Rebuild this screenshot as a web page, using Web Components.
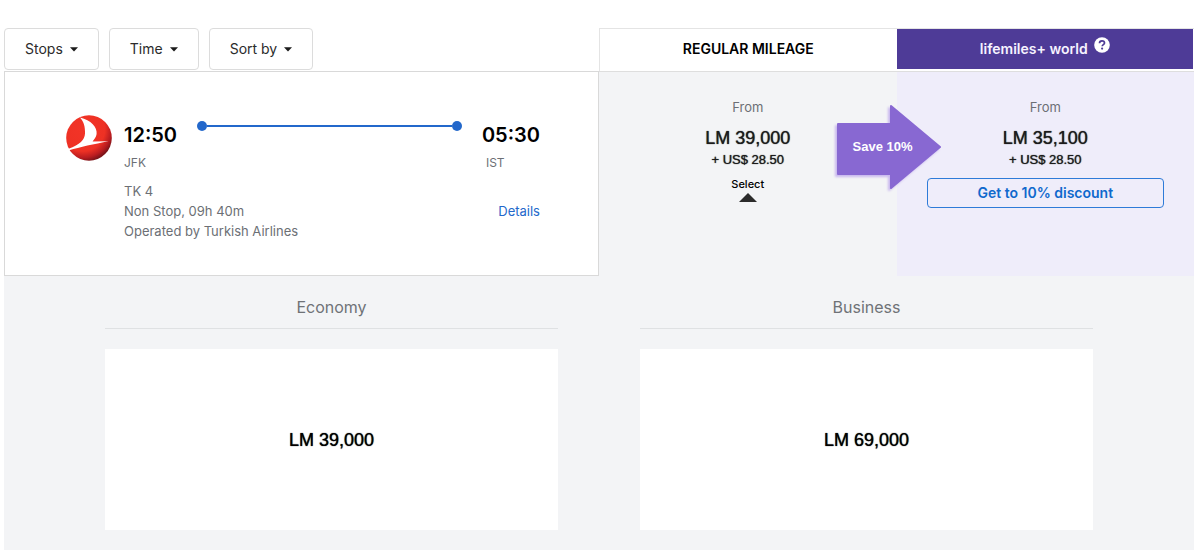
<!DOCTYPE html>
<html lang="en">
<head>
<meta charset="utf-8">
<title>Flight results</title>
<style>
  body { margin: 0; background: #fff; color: #1b1b1b; font-family: Inter, "Liberation Sans", sans-serif; font-size: 14px; line-height: 20px; }
</style>
</head>
<body>
<flight-results></flight-results>

<template id="flight-results">
  <style>
    :host { display: block; padding: 28px 6px 8px 4px; }
    .grid { display: grid; grid-template-columns: 2fr 1fr 1fr; }
    .filters { display: flex; gap: 10px; align-items: flex-start; }
    .cabins { display: grid; grid-template-columns: 1fr 1fr; padding: 19px 60px 20px; background: #f3f4f6; }
  </style>
  <div class="grid">
    <div class="filters">
      <filter-button>Stops</filter-button>
      <filter-button>Time</filter-button>
      <filter-button>Sort by</filter-button>
    </div>
    <fare-heading>REGULAR MILEAGE</fare-heading>
    <fare-heading plus>lifemiles+ world</fare-heading>
    <flight-card></flight-card>
    <fare-offer>
      <span slot="miles">LM 39,000</span>
      <span slot="tax">+ US$ 28.50</span>
      <select-toggle slot="action"></select-toggle>
    </fare-offer>
    <fare-offer plus>
      <save-arrow slot="badge">Save 10%</save-arrow>
      <span slot="miles">LM 35,100</span>
      <span slot="tax">+ US$ 28.50</span>
      <discount-button slot="action">Get to 10% discount</discount-button>
    </fare-offer>
  </div>
  <div class="cabins">
    <cabin-fare><span slot="name">Economy</span>LM 39,000</cabin-fare>
    <cabin-fare><span slot="name">Business</span>LM 69,000</cabin-fare>
  </div>
</template>

<template id="filter-button">
  <style>
    :host { display: block; }
    button { display: flex; align-items: center; gap: 7px; height: 42px; padding: 0 20px; border: 1px solid #dcdcdc; border-radius: 4px; background: #fff; color: #2b2b2b; font: inherit; cursor: pointer; }
    svg { display: block; }
  </style>
  <button type="button" aria-haspopup="true"><slot></slot>
    <svg width="8" height="5" viewBox="0 0 8 5" aria-hidden="true"><path d="M0 .3h8L4 4.6z" fill="#1b1b1b"/></svg>
  </button>
</template>

<template id="fare-heading">
  <style>
    :host { display: block; height: 43px; box-sizing: border-box; border: 1px solid #e4e4e4; border-width: 1px 0 0 1px; }
    .cell { display: flex; justify-content: center; height: 40px; align-items: center; color: #000; font-weight: 600; }
    button { display: none; }
    :host([plus]) { border-left: 0; padding-right: 1px; }
    :host([plus]) .cell { background: #4e3b97; color: #f6f3ff; gap: 6px; }
    :host([plus]) button { display: block; align-self: flex-start; margin: 8px 0 0; padding: 0; border: 0; background: none; cursor: pointer; }
    svg { display: block; }
  </style>
  <div class="cell"><slot></slot>
    <button type="button" aria-label="About lifemiles+ world">
      <svg width="16" height="16" viewBox="0 0 16 16" aria-hidden="true"><circle cx="8" cy="8" r="7.8" fill="#fff"/><path d="M5.5 6.2c0-1.5 1-2.4 2.5-2.4s2.5.9 2.5 2.1c0 1.700-2.300 1.800-2.300 3.400" fill="none" stroke="#4e3b97" stroke-width="1.700"/><circle cx="8.100" cy="11.600" r="1.100" fill="#4e3b97"/></svg>
    </button>
  </div>
</template>

<template id="flight-card">
  <style>
    :host { display: flex; gap: 12px; box-sizing: border-box; height: 205px; padding: 43px 58px 0 61px; border: 1px solid #d9d9d9; background: #fff; color: #6c6f75; }
    .logo { flex: none; display: block; }
    .trip { flex: 1; padding-top: 6px; }
    .leg { display: flex; }
    .time { color: #000; font-size: 20px; line-height: 28px; font-weight: 600; }
    .code { font-size: 12px; margin-top: 4px; }
    .arrive .code { padding-left: 4px; }
    .track { flex: 1; display: flex; align-items: center; height: 10px; margin: 0 20px; }
    .track::before, .track::after { content: ""; width: 10px; height: 10px; border-radius: 50%; background: #2368cb; }
    .track i { flex: 1; height: 2px; background: #2368cb; }
    .info { display: flex; justify-content: space-between; align-items: center; margin-top: 8px; font-size: 13px; }
    a { color: #2368cb; text-decoration: none; }
  </style>
  <svg class="logo" width="46" height="46" viewBox="0 0 46 46" role="img" aria-label="Turkish Airlines">
    <defs><radialGradient id="ball" cx=".36" cy=".3" r=".72"><stop offset="0" stop-color="#f23427"/><stop offset=".68" stop-color="#ee3124"/><stop offset=".88" stop-color="#b91c20"/><stop offset="1" stop-color="#7c1419"/></radialGradient></defs>
    <circle cx="23" cy="23" r="22.800" fill="url(#ball)"/>
    <path d="M14 2.500C25 5 31.500 12.500 30.600 19c-.4 3.200-2.300 5-4 7.500l15.900-.3C28 29 14 32 3.200 35.200l-.7-1.400C14 29.500 18.700 25 19 18.500 19.200 12 18 7 14 2.500z" fill="#fff"/>
  </svg>
  <div class="trip">
    <div class="leg">
      <div><div class="time">12:50</div><div class="code">JFK</div></div>
      <div class="track"><i></i></div>
      <div class="arrive"><div class="time">05:30</div><div class="code">IST</div></div>
    </div>
    <div class="info">
      <div><div>TK 4</div><div>Non Stop, 09h 40m</div><div>Operated by Turkish Airlines</div></div>
      <a href="#details">Details</a>
    </div>
  </div>
</template>

<template id="fare-offer">
  <style>
    :host { display: block; position: relative; box-sizing: border-box; border-top: 1px solid #dedede; padding: 25px 30px 0; background: #f3f4f6; text-align: center; color: #1b1b1b; }
    :host([plus]) { background: #efedfa; }
    .from { color: #6c6f75; margin-bottom: 10px; font-size: 13px; }
    .miles, .tax { font-family: "Liberation Sans", Arial, sans-serif; text-shadow: 0 0 1px currentColor; }
    .miles { font-size: 18px; line-height: 23px; }
    .tax { font-size: 13px; margin-bottom: 8px; }
  </style>
  <slot name="badge"></slot>
  <div class="from">From</div>
  <div class="miles"><slot name="miles"></slot></div>
  <div class="tax"><slot name="tax"></slot></div>
  <slot name="action"></slot>
</template>

<template id="select-toggle">
  <style>
    :host { display: flex; justify-content: center; }
    button { display: flex; flex-direction: column; align-items: center; gap: 3px; padding: 0; border: 0; background: none; color: #000; font: inherit; font-size: 11px; line-height: 12px; font-weight: 500; cursor: pointer; }
  </style>
  <button type="button" aria-expanded="true">Select
    <svg width="18" height="9" viewBox="0 0 18 9" aria-hidden="true"><path d="M0 9h18L9 0z" fill="#2b2b2b"/></svg>
  </button>
</template>

<template id="discount-button">
  <style>
    :host { display: block; }
    button { display: block; width: 100%; height: 30px; padding: 0; border: 1px solid #2e7bd8; border-radius: 4px; background: none; color: #1069cd; font: inherit; font-weight: 600; cursor: pointer; }
  </style>
  <button type="button"><slot></slot></button>
</template>

<template id="save-arrow">
  <style>
    :host { position: absolute; left: -68px; top: 31px; width: 112px; height: 88px; display: grid; align-items: center; color: #fff; font: bold 13px/20px "Liberation Sans", Arial, sans-serif; }
    svg, span { grid-area: 1 / 1; }
    span { justify-self: start; padding-left: 24px; z-index: 1; }
    svg { display: block; overflow: visible; filter: drop-shadow(-2px 2px 1px #c9b8ee); }
  </style>
  <svg width="112" height="88" viewBox="0 0 112 88" aria-hidden="true"><path d="M9 21h53V3l49 41-49 41V71H9z" fill="#8868d2" stroke="#8868d2" stroke-width="2" stroke-linejoin="round"/></svg>
  <span><slot></slot></span>
</template>

<template id="cabin-fare">
  <style>
    :host { display: block; padding: 0 41px; text-align: center; }
    .name { padding-bottom: 9px; border-bottom: 1px solid #dfe1e3; color: #6f7276; font-size: 16px; line-height: 24px; }
    .fare { margin-top: 20px; padding: 79px 0 78px; background: #fff; color: #000; font: 18px/24px "Liberation Sans", Arial, sans-serif; text-shadow: 0 0 1px currentColor; }
  </style>
  <div class="name"><slot name="name"></slot></div>
  <div class="fare"><slot></slot></div>
</template>

<script>
  for (const template of document.querySelectorAll('template[id]')) {
    customElements.define(template.id, class extends HTMLElement {
      constructor() {
        super();
        this.attachShadow({ mode: 'open' }).append(template.content.cloneNode(true));
      }
    });
  }
</script>
</body>
</html>
